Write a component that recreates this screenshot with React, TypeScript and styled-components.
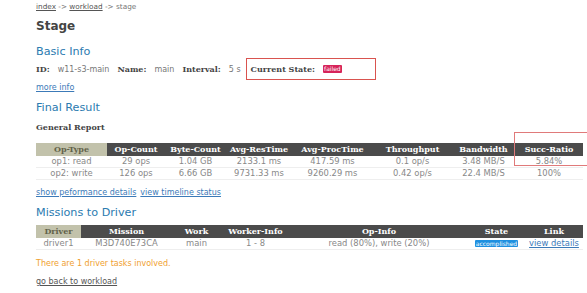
import styled, { createGlobalStyle } from "styled-components";

const GlobalStyle = createGlobalStyle`
  body {
    margin: 0;
    background: #fff;
    font-family: "DejaVu Sans", Verdana, sans-serif;
    font-size: 8px;
    color: #777;
  }
`;

const Page = styled.div`
  padding: 0 4px 0 36px;
  display: flex;
  flex-direction: column;
`;

const Crumbs = styled.div`
  height: 13px;
  line-height: 13px;
  font-size: 7.3px;
  color: #777;
`;

const Link = styled.a`
  color: #555;
  text-decoration: underline;
  cursor: pointer;
`;

const BlueLink = styled(Link)`
  color: #3c7ab8;
`;

const Title = styled.h1`
  margin: 5px 0 0;
  font-size: 12px;
  line-height: 16px;
  color: #444;
`;

const Section = styled.h2<{ $top?: number }>`
  margin: ${({ $top }) => $top ?? 6}px 0 0;
  font-size: 11.2px;
  line-height: 14px;
  font-weight: normal;
  color: #2b7bb0;
`;

const InfoRow = styled.div`
  display: flex;
  align-items: center;
  gap: 8px;
  height: 22px;
  margin-top: -1px;
`;

const Label = styled.b`
  font-family: "DejaVu Serif", Georgia, serif;
  font-size: 8px;
  color: #444;
  margin-right: 8px;
`;

const StateBox = styled.div`
  display: flex;
  align-items: center;
  width: 130px;
  height: 22px;
  border: 1px solid #d9534f;
  padding-left: 4px;
  margin-left: -3px;
  box-sizing: border-box;
`;

const Badge = styled.span<{ $color: string }>`
  background: ${({ $color }) => $color};
  color: #fff;
  font-size: 6px;
  line-height: 8px;
  padding: 0 1px;
  border-radius: 1px;
`;

const MoreInfo = styled.div`
  margin-top: 3px;
`;

const SubHead = styled.div`
  margin-top: 7px;
  font-family: "DejaVu Serif", Georgia, serif;
  font-weight: bold;
  color: #444;
  font-size: 8px;
`;

const Table = styled.table<{ $top?: number }>`
  border-collapse: collapse;
  width: 547px;
  table-layout: fixed;
  margin-top: ${({ $top }) => $top ?? 8}px;
`;

const Th = styled.th<{ $first?: boolean }>`
  position: relative;
  height: 13px;
  padding: 0;
  font-family: "DejaVu Serif", Georgia, serif;
  font-size: 8px;
  line-height: 13px;
  background: ${({ $first }) => ($first ? "#c2c2ab" : "#4b4b4b")};
  color: ${({ $first }) => ($first ? "#62624a" : "#fff")};
`;

const Td = styled.td`
  height: 11px;
  padding: 0;
  text-align: center;
  line-height: 11px;
  font-size: 8.4px;
  color: #888;
  border-bottom: 1px solid #eee;
`;

const RedFrame = styled.div`
  position: absolute;
  left: -1px;
  right: -5px;
  top: -11px;
  height: 34px;
  border: 1px solid #e07a7a;
  box-sizing: border-box;
  pointer-events: none;
`;

const Links = styled.div`
  margin-top: 8px;
  display: flex;
  gap: 4px;
`;

const Notice = styled.div`
  margin-top: 9px;
  color: #f0a030;
`;

const Back = styled.div`
  margin-top: 9px;
`;

const ops = [
  ["op1: read", "29 ops", "1.04 GB", "2133.1 ms", "417.59 ms", "0.1 op/s", "3.48 MB/S", "5.84%"],
  ["op2: write", "126 ops", "6.66 GB", "9731.33 ms", "9260.29 ms", "0.42 op/s", "22.4 MB/S", "100%"],
];

const opHeads = ["Op-Type", "Op-Count", "Byte-Count", "Avg-ResTime", "Avg-ProcTime", "Throughput", "Bandwidth", "Succ-Ratio"];
const opWidths = [71, 58, 61, 66, 81, 79, 63, 68];

const drvHeads = ["Driver", "Mission", "Work", "Worker-Info", "Op-Info", "State", "Link"];
const drvWidths = [45, 91, 49, 69, 178, 57, 58];

export default function App() {
  return (
    <>
      <GlobalStyle />
      <Page>
        <Crumbs>
          <Link>index</Link> -&gt; <Link>workload</Link> -&gt; stage
        </Crumbs>
        <Title>Stage</Title>
        <Section $top={11}>Basic Info</Section>
        <InfoRow>
          <span><Label>ID:</Label>w11-s3-main</span>
          <span><Label>Name:</Label>main</span>
          <span><Label>Interval:</Label>5 s</span>
          <StateBox>
            <Label>Current State:</Label>
            <Badge $color="#d6245a">failed</Badge>
          </StateBox>
        </InfoRow>
        <MoreInfo>
          <BlueLink>more info</BlueLink>
        </MoreInfo>
        <Section $top={9}>Final Result</Section>
        <SubHead>General Report</SubHead>
        <Table $top={11}>
          <colgroup>
            {opWidths.map((w, i) => <col key={i} style={{ width: w }} />)}
          </colgroup>
          <thead>
            <tr>
              {opHeads.map((h, i) => (
                <Th key={h} $first={i === 0}>
                  {h}
                  {i === 7 && <RedFrame />}
                </Th>
              ))}
            </tr>
          </thead>
          <tbody>
            {ops.map((row, r) => (
              <tr key={r}>
                {row.map((c, i) => <Td key={i}>{c}</Td>)}
              </tr>
            ))}
          </tbody>
        </Table>
        <Links>
          <BlueLink>show peformance details</BlueLink>
          <BlueLink>view timeline status</BlueLink>
        </Links>
        <Section $top={9}>Missions to Driver</Section>
        <Table $top={5}>
          <colgroup>
            {drvWidths.map((w, i) => <col key={i} style={{ width: w }} />)}
          </colgroup>
          <thead>
            <tr>
              {drvHeads.map((h, i) => <Th key={h} $first={i === 0}>{h}</Th>)}
            </tr>
          </thead>
          <tbody>
            <tr>
              <Td>driver1</Td>
              <Td>M3D740E73CA</Td>
              <Td>main</Td>
              <Td>1 - 8</Td>
              <Td>read (80%), write (20%)</Td>
              <Td><Badge $color="#1e90e0">accomplished</Badge></Td>
              <Td><BlueLink>view details</BlueLink></Td>
            </tr>
          </tbody>
        </Table>
        <Notice>There are 1 driver tasks involved.</Notice>
        <Back><Link>go back to workload</Link></Back>
      </Page>
    </>
  );
}
